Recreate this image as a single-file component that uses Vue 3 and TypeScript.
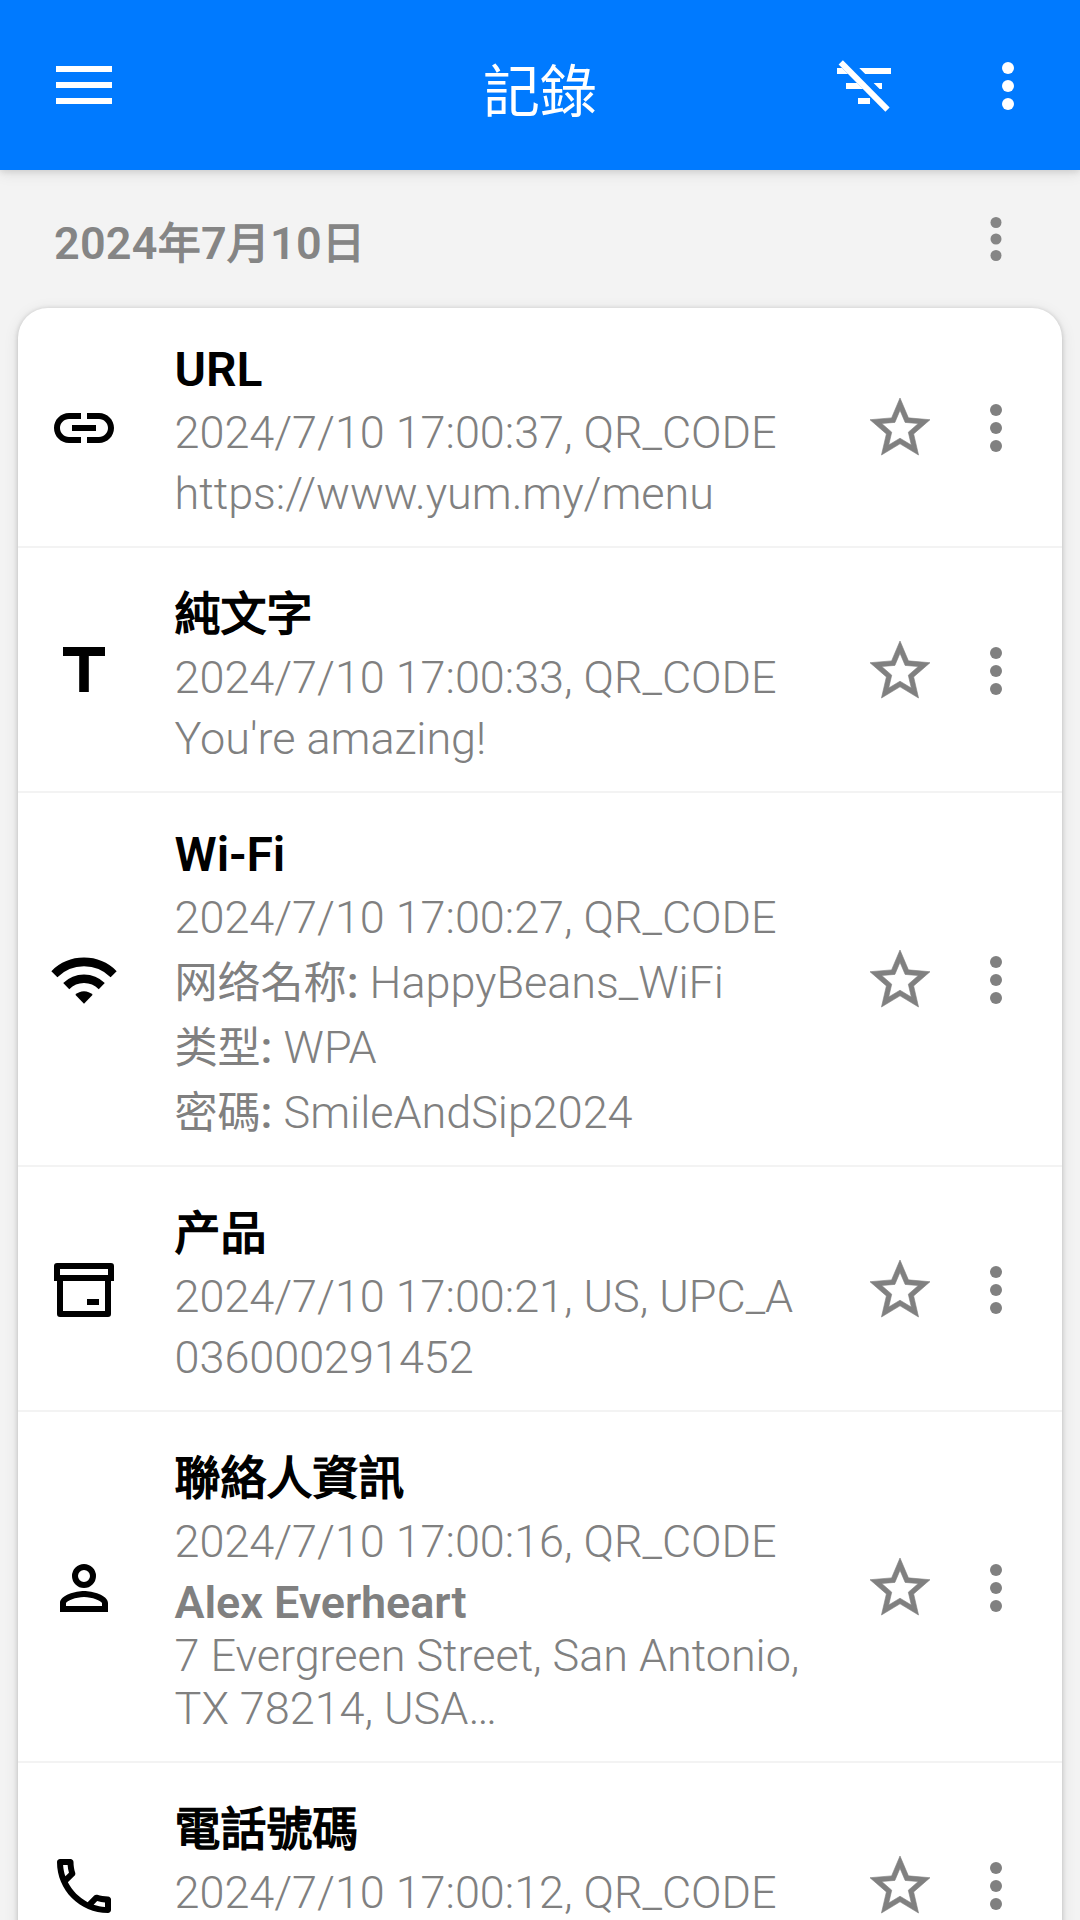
<script setup lang="ts">
type IconName = 'link' | 'text' | 'wifi' | 'product' | 'person' | 'phone'

interface DetailLine {
  label?: string
  value: string
  kind: 'plain' | 'field' | 'name' | 'address'
}

interface ScanRecord {
  title: string
  latin?: boolean
  icon: IconName
  meta: string
  details: DetailLine[]
}

const records: ScanRecord[] = [
  {
    title: 'URL',
    latin: true,
    icon: 'link',
    meta: '2024/7/10 17:00:37, QR_CODE',
    details: [{ value: 'https://www.yum.my/menu', kind: 'plain' }],
  },
  {
    title: '純文字',
    icon: 'text',
    meta: '2024/7/10 17:00:33, QR_CODE',
    details: [{ value: "You're amazing!", kind: 'plain' }],
  },
  {
    title: 'Wi-Fi',
    latin: true,
    icon: 'wifi',
    meta: '2024/7/10 17:00:27, QR_CODE',
    details: [
      { label: '网络名称', value: 'HappyBeans_WiFi', kind: 'field' },
      { label: '类型', value: 'WPA', kind: 'field' },
      { label: '密碼', value: 'SmileAndSip2024', kind: 'field' },
    ],
  },
  {
    title: '产品',
    icon: 'product',
    meta: '2024/7/10 17:00:21, US, UPC_A',
    details: [{ value: '036000291452', kind: 'plain' }],
  },
  {
    title: '聯絡人資訊',
    icon: 'person',
    meta: '2024/7/10 17:00:16, QR_CODE',
    details: [
      { value: 'Alex Everheart', kind: 'name' },
      { value: '7 Evergreen Street, San Antonio, TX 78214, USA…', kind: 'address' },
    ],
  },
  {
    title: '電話號碼',
    icon: 'phone',
    meta: '2024/7/10 17:00:12, QR_CODE',
    details: [],
  },
]
</script>

<template>
  <div class="screen">
    <header class="bar">
      <div class="bar-side">
        <svg class="icon" viewBox="0 0 72 72" fill="currentColor">
          <path d="M8 16h56v6H8zM8 32h56v6H8zM8 48h56v6H8z" />
        </svg>
      </div>
      <h1 class="bar-title">記錄</h1>
      <div class="bar-side bar-actions">
        <svg class="icon" viewBox="0 0 24 24" fill="currentColor">
          <path d="M3 6h1.7l2 2H3zM10.4 6H21v2h-8.6zM6 11h3.7l2 2H6zM15.2 11H18v2h-.8zM10 16h4v2h-4z" />
          <path d="M3.55 4.85 4.97 3.43 20.55 19.2 19.13 20.62z" />
        </svg>
        <svg class="icon" viewBox="0 0 24 24" fill="currentColor">
          <circle cx="12" cy="6" r="2" /><circle cx="12" cy="12" r="2" /><circle cx="12" cy="18" r="2" />
        </svg>
      </div>
    </header>

    <main>
      <div class="day">
        <h2 class="day-title">2024<span class="cjk">年</span>7<span class="cjk">月</span>10<span class="cjk">日</span></h2>
        <svg class="day-more" viewBox="0 0 24 24" fill="currentColor">
          <circle cx="12" cy="6" r="2" /><circle cx="12" cy="12" r="2" /><circle cx="12" cy="18" r="2" />
        </svg>
      </div>

      <ul class="list">
        <li v-for="record in records" :key="record.meta" class="row">
          <svg class="icon kind-icon" viewBox="0 0 24 24" fill="currentColor">
            <path
              v-if="record.icon === 'link'"
              d="M4 12c0-1.66 1.34-3 3-3h4V7H7c-2.76 0-5 2.24-5 5s2.24 5 5 5h4v-2H7c-1.66 0-3-1.34-3-3zM8 13h8v-2H8v2zm9-6h-4v2h4c1.66 0 3 1.34 3 3s-1.34 3-3 3h-4v2h4c2.76 0 5-2.24 5-5s-2.24-5-5-5z"
            />
            <path v-else-if="record.icon === 'text'" d="M5 4v3h5.4v12h3.2V7H19V4z" />
            <g v-else-if="record.icon === 'wifi'">
              <path d="M2.12 10.05a13.97 13.97 0 0 1 19.76 0M6.08 14.05a8.4 8.4 0 0 1 11.84 0" fill="none" stroke="currentColor" stroke-width="2.85" />
              <path d="M12 19.9 9.1 16.95a4.15 4.15 0 0 1 5.8 0z" />
            </g>
            <path
              v-else-if="record.icon === 'product'"
              fill-rule="evenodd"
              d="M3 3h18a1 1 0 0 1 1 1v5h-1v11a1 1 0 0 1-1 1H4a1 1 0 0 1-1-1V9H2V4a1 1 0 0 1 1-1zM4 5v2h16V5zM5 9v10h14V9zM13 15h4v2h-4z"
            />
            <path
              v-else-if="record.icon === 'person'"
              fill-rule="evenodd"
              d="M12 4a4 4 0 1 0 0 8 4 4 0 0 0 0-8zm0 2a2 2 0 1 1 0 4 2 2 0 0 1 0-4zM12 13c-2.67 0-8 1.34-8 4v3h16v-3c0-2.66-5.33-4-8-4zm6 5H6v-.99c.2-.72 3.3-2.01 6-2.01s5.8 1.29 6 2z"
            />
            <path
              v-else
              d="M6.54 5c.06.89.21 1.76.45 2.59l-1.2 1.2c-.41-1.2-.67-2.47-.76-3.79h1.51m9.86 12.02c.85.24 1.72.39 2.6.45v1.49c-1.32-.09-2.59-.35-3.8-.75l1.2-1.19M7.5 3H4c-.55 0-1 .45-1 1 0 9.39 7.61 17 17 17 .55 0 1-.45 1-1v-3.49c0-.55-.45-1-1-1-1.24 0-2.45-.2-3.57-.57-.1-.04-.21-.05-.31-.05-.26 0-.51.1-.71.29l-2.2 2.2c-2.83-1.45-5.15-3.76-6.59-6.59l2.2-2.2c.28-.28.36-.67.25-1.02C8.7 6.45 8.5 5.25 8.5 4c0-.55-.45-1-1-1z"
            />
          </svg>

          <div class="body">
            <h3 class="title" :class="{ latin: record.latin }">
              <span :class="{ cjk: !record.latin }">{{ record.title }}</span>
            </h3>
            <p class="meta">{{ record.meta }}</p>
            <p v-for="line in record.details" :key="line.value" :class="line.kind">
              <span v-if="line.label" class="label"><span class="cjk">{{ line.label }}</span>: </span>{{ line.value }}
            </p>
          </div>

          <svg class="icon star" viewBox="0 0 24 24" fill="currentColor">
            <path
              d="M22 9.24l-7.19-.62L12 2 9.19 8.63 2 9.24l5.46 4.73L5.82 21 12 17.27 18.18 21l-1.63-7.03L22 9.24zM12 15.4l-3.76 2.27 1-4.28-3.32-2.88 4.38-.38L12 6.1l1.71 4.04 4.38.38-3.32 2.88 1 4.28L12 15.4z"
              stroke="currentColor"
              stroke-width="0.2"
              stroke-linejoin="round"
            />
          </svg>
          <svg class="icon more" viewBox="0 0 24 24" fill="currentColor">
            <circle cx="12" cy="6" r="2" /><circle cx="12" cy="12" r="2" /><circle cx="12" cy="18" r="2" />
          </svg>
        </li>
      </ul>
    </main>
  </div>
</template>

<style>
body {
  margin: 0;
}
</style>

<style scoped>
.screen {
  width: 1080px;
  height: 1920px;
  overflow: hidden;
  background: #f3f3f3;
  color: #000;
  font-family: Roboto, 'Noto Sans CJK TC', sans-serif;
  font-size: 45px;
}

h1,
h2,
h3,
p,
ul {
  margin: 0;
  padding: 0;
}

.icon {
  display: block;
  flex: none;
  width: 72px;
  height: 72px;
}

.cjk {
  font-family: 'Noto Sans CJK TC', 'Noto Sans CJK SC', sans-serif;
  font-size: 0.957em;
  font-weight: 400;
  line-height: 0;
}

.bar {
  display: flex;
  align-items: center;
  box-sizing: border-box;
  height: 170px;
  padding: 2px 36px 0 48px;
  background: #007aff;
  color: #fff;
  box-shadow: 0 2px 6px rgba(0, 0, 0, 0.1), 0 4px 14px rgba(0, 0, 0, 0.08);
}

.bar-side {
  display: flex;
  width: 240px;
}

.bar-title {
  flex: 1;
  padding-top: 2px;
  text-align: center;
  font-family: 'Noto Sans CJK TC', sans-serif;
  font-size: 57px;
  font-weight: 400;
  line-height: 80px;
}

.bar .bar-actions {
  width: 252px;
  justify-content: flex-end;
  gap: 72px;
}

.day {
  display: flex;
  align-items: center;
  justify-content: space-between;
  height: 138px;
  padding: 0 51px 0 54px;
  color: #858585;
}

.day-title {
  padding-top: 10px;
  font-size: 45px;
  font-weight: 600;
  letter-spacing: 0.2px;
  line-height: 60px;
}

.day-title .cjk {
  -webkit-text-stroke: 1.3px currentColor;
}

.day-more {
  width: 66px;
  height: 66px;
}

.list {
  margin: 0 18px;
  list-style: none;
  background: #fff;
  border-radius: 30px 30px 0 0;
  box-shadow: 0 1px 5px rgba(0, 0, 0, 0.2), 0 3px 16px rgba(0, 0, 0, 0.09);
}

.row {
  display: flex;
  align-items: center;
  min-height: 238px;
  padding-left: 30px;
  padding-right: 30px;
  border-bottom: 2px solid #f3f3f3;
}

.row:last-child {
  min-height: 243px;
}

.row > .icon {
  margin-top: 2px;
}

.body {
  flex: 1;
  align-self: flex-start;
  padding: 30px 40.4px 22px 54.6px;
}

.title {
  font-size: 48px;
  line-height: 67px;
  padding-top: 2px;
}

.title.latin {
  padding-top: 0;
  font-weight: 600;
  letter-spacing: -0.1px;
  line-height: 64px;
}

.title .cjk {
  -webkit-text-stroke: 1.6px currentColor;
}

.meta,
.plain,
.field,
.name,
.address {
  color: #808080;
  font-weight: 300;
  letter-spacing: -0.04px;
  line-height: 61px;
}

.field {
  line-height: 65px;
}

.meta + .field {
  padding-top: 2px;
}

.field:last-child {
  margin-bottom: -2px;
}

.label {
  font-weight: 500;
}

.name {
  margin-bottom: -4px;
  font-weight: 600;
  letter-spacing: -0.1px;
}

.address {
  margin-bottom: 4px;
  line-height: 53px;
}

.kind-icon {
  color: #000;
}

.star,
.more {
  color: #808080;
}

.more {
  margin-left: 24px;
}
</style>
